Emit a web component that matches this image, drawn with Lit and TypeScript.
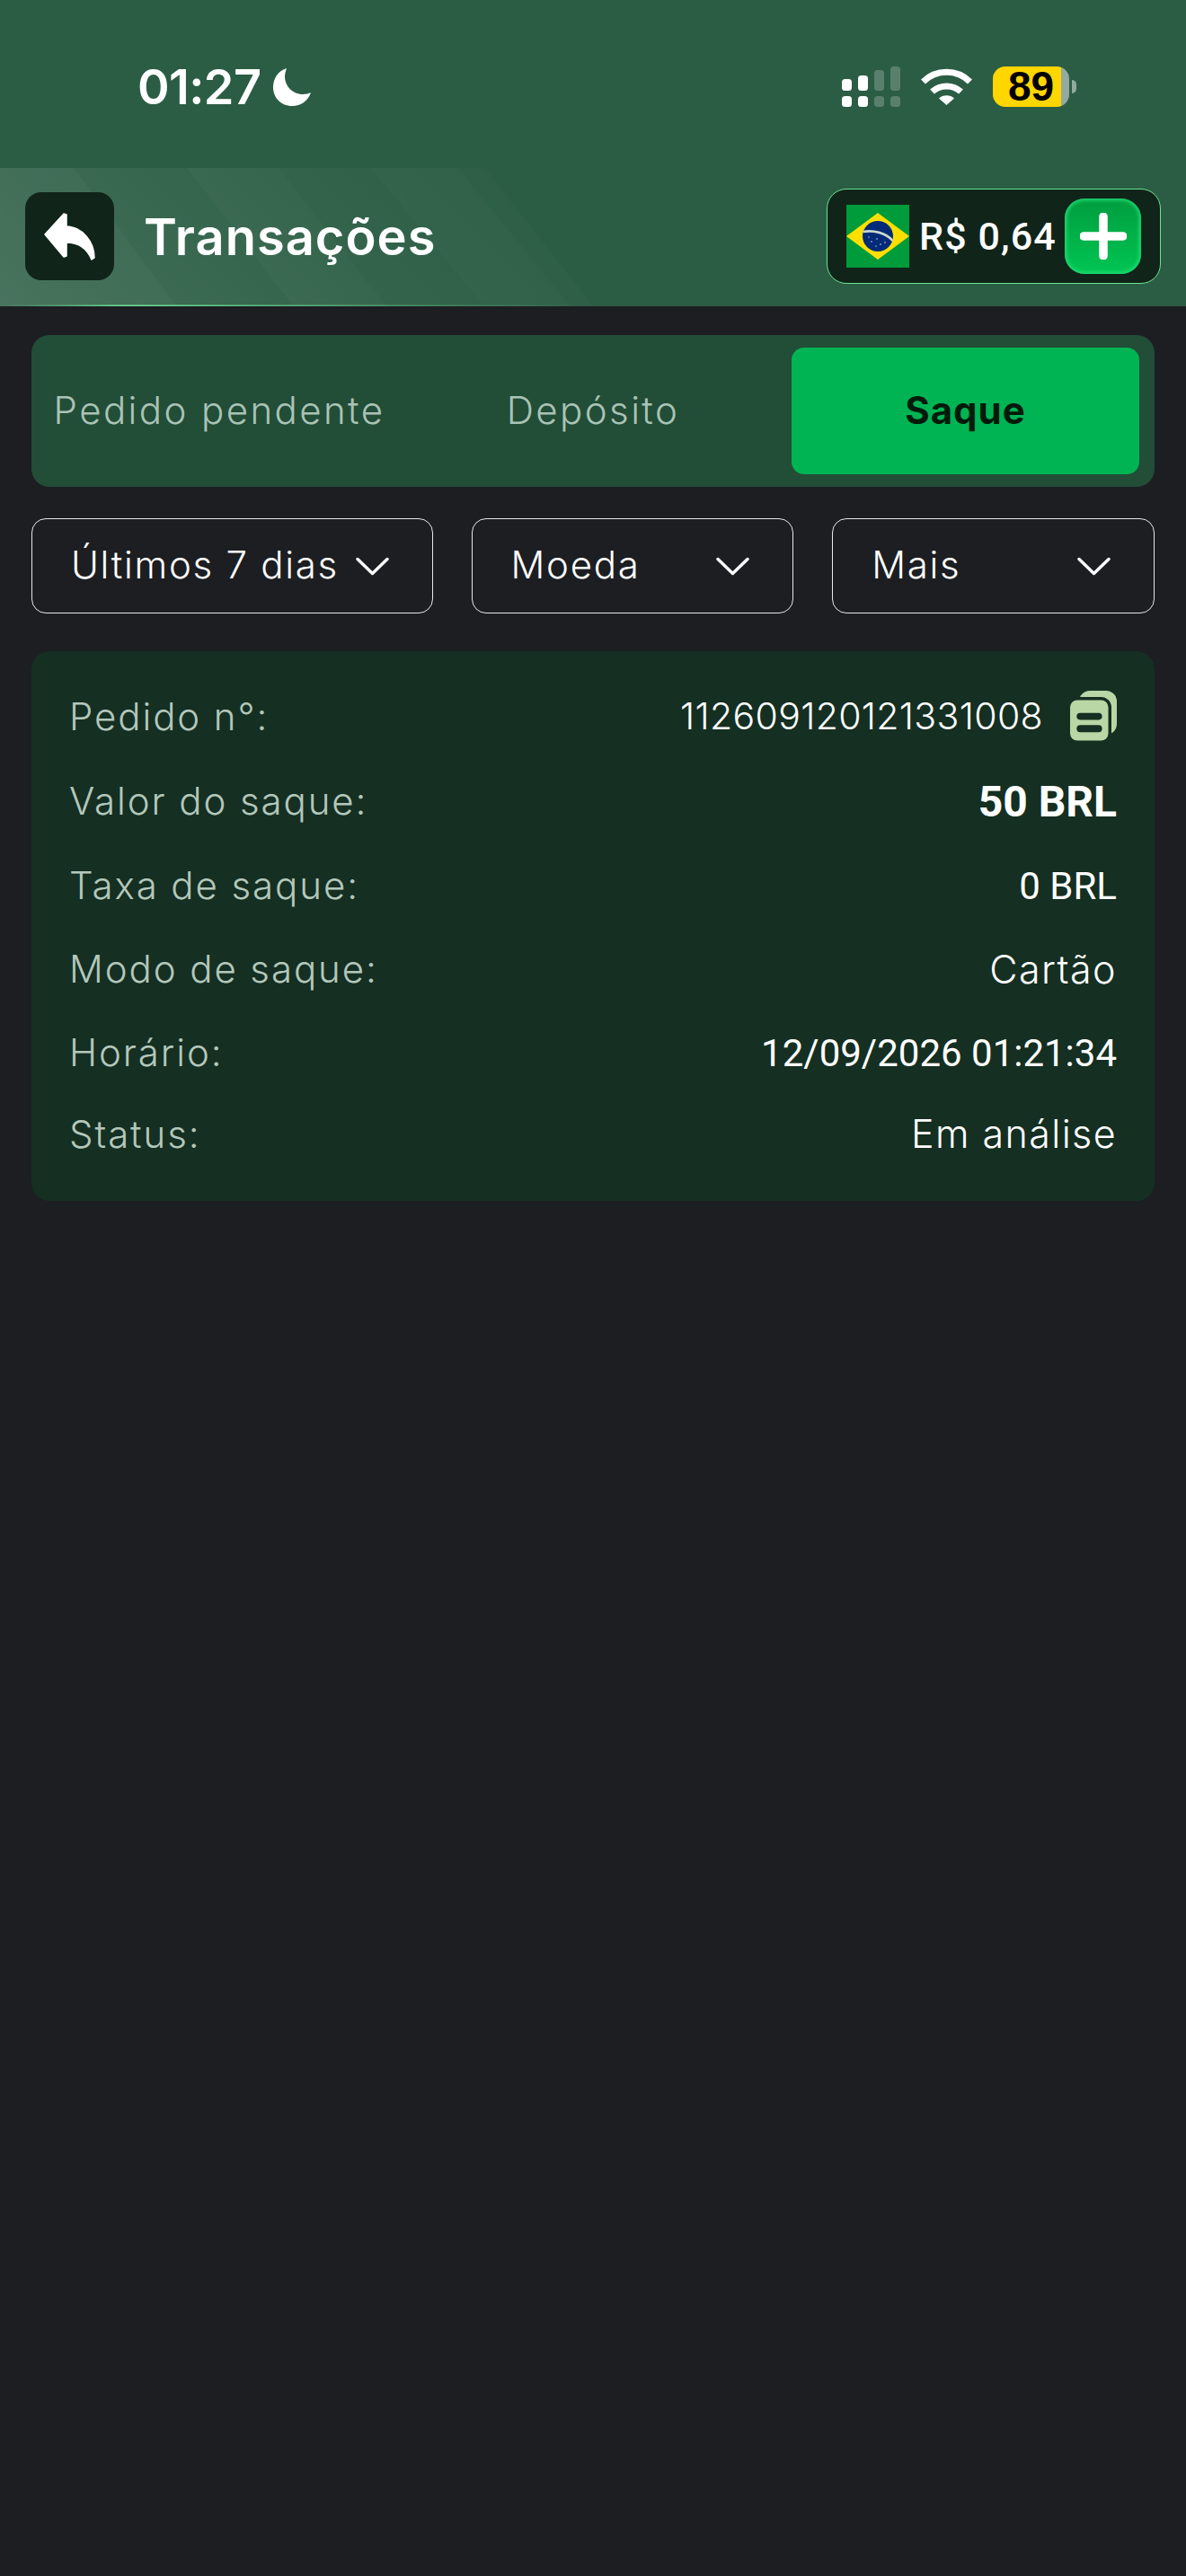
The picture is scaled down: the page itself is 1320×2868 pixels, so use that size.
import { LitElement, html, css, svg } from "lit";
import { customElement } from "lit/decorators.js";

const rows = [
  { label: "Pedido n°", value: "112609120121331008", cls: "mono", copy: true },
  { label: "Valor do saque", value: "50 BRL", cls: "amount" },
  { label: "Taxa de saque", value: "0 BRL", cls: "rob" },
  { label: "Modo de saque", value: "Cartão", cls: "plain" },
  { label: "Horário", value: "12/09/2026 01:21:34", cls: "rob" },
  { label: "Status", value: "Em análise", cls: "plain" },
];

const chevron = html`<svg class="chev" viewBox="0 0 37 21" width="37" height="21"><path d="M2 2.5 L18.5 18.5 L35 2.5" fill="none" stroke="#fff" stroke-width="3.4" stroke-linecap="round" stroke-linejoin="round"/></svg>`;

const stripes = svg`
  <defs>
    <linearGradient id="base" gradientUnits="userSpaceOnUse" x1="0" y1="341" x2="400" y2="-60">
      <stop offset="0" stop-color="#fff" stop-opacity="0.11"/>
      <stop offset="0.5" stop-color="#fff" stop-opacity="0.045"/>
      <stop offset="1" stop-color="#fff" stop-opacity="0"/>
    </linearGradient>
    <linearGradient id="st" gradientUnits="userSpaceOnUse" x1="0" y1="341" x2="640" y2="187">
      <stop offset="0" stop-color="#fff" stop-opacity="0.03"/>
      <stop offset="1" stop-color="#fff" stop-opacity="0.01"/>
    </linearGradient>
    <linearGradient id="ln" x1="0" y1="0" x2="1" y2="0">
      <stop offset="0" stop-color="#5fe08f" stop-opacity="0"/>
      <stop offset="0.22" stop-color="#6fe79a" stop-opacity="1"/>
      <stop offset="1" stop-color="#5fe08f" stop-opacity="0"/>
    </linearGradient>
  </defs>
  <polygon points="0,187 540,187 660,341 0,341" fill="url(#base)"/>
  <polygon points="0,187 82,187 197,341 0,341" fill="url(#st)"/>
  <polygon points="208,187 310,187 430,341 327,341" fill="url(#st)"/>
  <polygon points="413,187 510,187 635,341 539,341" fill="url(#st)"/>
  <rect x="0" y="339.5" width="640" height="1.5" fill="url(#ln)"/>
`;

@customElement("app-root")
export class AppRoot extends LitElement {
  static styles = css`
    :host {
      display: block;
      width: 1320px;
      min-height: 2868px;
      background: #1c1e22;
      font-family: Inter, "Noto Sans", sans-serif;
      color: #fff;
    }
    .header {
      position: relative;
      height: 341px;
      box-sizing: border-box;
      background: #2b5d44;
      padding-top: 74px;
      overflow: hidden;
    }
    .deco { position: absolute; left: 0; top: 0; }
    .status {
      position: relative;
      display: flex;
      align-items: flex-start;
      justify-content: space-between;
      height: 46px;
      padding: 0 122px 0 153px;
    }
    .status-left { display: flex; align-items: center; gap: 14px; height: 46px; }
    .time { font-size: 54px; font-weight: 600; line-height: 46px; letter-spacing: -0.6px; }
    .status-right { display: flex; align-items: flex-start; }
    .signal { display: block; margin-right: 23px; }
    .wifi { display: block; margin-top: 2px; margin-right: 23px; }
    .battery { display: flex; align-items: center; gap: 3px; }
    .batt-body {
      width: 85px; height: 45px; border-radius: 14px; box-sizing: border-box;
      background: linear-gradient(90deg, #ffd600 0 76px, #93aa9d 76px);
      display: flex; align-items: center; padding-left: 17px;
      color: #000; font: 700 46px/45px "Liberation Sans", Arial, sans-serif;
    }
    .batt-nub { width: 5px; height: 15px; border-radius: 0 6px 6px 0; background: #93aa9d; }
    .toolbar {
      position: relative;
      display: flex;
      align-items: center;
      height: 106px;
      margin-top: 90px;
      padding: 0 28px;
    }
    .back {
      width: 99px; height: 98px; border-radius: 18px; background: #102419;
      display: flex; align-items: center; justify-content: center;
    }
    .title { margin-left: 33px; font-size: 56px; font-weight: 600; flex: 1; line-height: 60px; letter-spacing: 1px; padding-top: 1px; }
    .wallet {
      display: flex; align-items: center; box-sizing: border-box;
      width: 372px; height: 106px; border: 1.5px solid #6be394; border-radius: 22px;
      background: #102419; padding-left: 21px;
    }
    .flag { display: block; }
    .bal { margin-left: 11px; font: 500 43px/50px Roboto, sans-serif; letter-spacing: 1.1px; width: 152px; white-space: nowrap; }
    .plus {
      margin-left: 10px; width: 85px; height: 84px; border-radius: 22px;
      background: linear-gradient(180deg, #009c3e 0%, #00c653 100%);
      box-shadow: inset 0 0 4px 2px #22dd77;
      display: flex; align-items: center; justify-content: center;
    }
    .content { padding: 32px 35px 0; }
    .tabs {
      display: grid;
      grid-template-columns: 390px 442px 387px;
      height: 169px; box-sizing: border-box;
      padding: 14px 17px 14px 14px;
      background: #224d37; border-radius: 20px;
    }
    .tab {
      display: flex; align-items: center; justify-content: center;
      font-size: 42px; font-weight: 300; color: #a9c3b5; letter-spacing: 2.4px;
      white-space: nowrap; border-radius: 14px; padding-bottom: 3px;
    }
    .tab.on { background: #00b453; color: #001a0b; font-weight: 700; letter-spacing: 1px; }
    .filters { display: flex; gap: 43px; margin-top: 35px; }
    .filter {
      display: flex; align-items: center; justify-content: space-between;
      box-sizing: border-box; height: 106px; border: 1.5px solid #e6e8e8; border-radius: 16px;
      padding: 0 48px 3px 43px; font-size: 42px; font-weight: 300; white-space: nowrap; letter-spacing: 1.7px;
    }
    .chev { margin-top: 3px; }
    .f1 { width: 447px; } .f2 { width: 359px; } .f3 { width: 359px; }
    .card {
      display: grid;
      grid-template-rows: 94px 94.5px 94px 92.5px 92px 90px;
      box-sizing: border-box; height: 612px; margin-top: 42px;
      padding: 26px 42px 29px; background: #152f22; border-radius: 20px;
    }
    .row { display: flex; align-items: center; justify-content: space-between; }
    .label { font-size: 42px; font-weight: 300; color: #b3c7bb; letter-spacing: 1.9px; white-space: nowrap; padding-bottom: 2px; }
    .val { display: flex; align-items: center; white-space: nowrap; }
    .val.mono, .val.plain { font-size: 43px; font-weight: 300; letter-spacing: 1.4px; padding-bottom: 2px; }
    .val.mono { font-size: 41px; letter-spacing: 0.35px; }
    .val.rob { font: 400 42px Roboto, sans-serif; }
    .val.amount { font: 700 48px Roboto, sans-serif; }
    .copy { display: block; margin-left: 30px; overflow: visible; }
  `;

  render() {
    return html`
      <div class="header">
        <svg class="deco" width="1320" height="341" viewBox="0 0 1320 341">${stripes}</svg>
        <div class="status">
          <div class="status-left">
            <span class="time">01:27</span>
            <svg viewBox="0 0 42 42" width="42" height="42"><path d="M15 0 C5 3 0 12 0 21 C0 33 9 42 21 42 C31 42 39 36 42 27 C40 28 36 29 33 29 C22 29 13 20 13 9 C13 6 14 3 15 0 Z" fill="#fff"/></svg>
          </div>
          <div class="status-right">
            <svg class="signal" viewBox="0 0 65 45" width="65" height="45">
              <g fill="#fff">
                <rect x="0" y="14" width="11" height="13" rx="3.5"/><rect x="18" y="10" width="11" height="17" rx="3.5"/>
                <rect x="0" y="33" width="11" height="12" rx="3.5"/><rect x="18" y="33" width="11" height="12" rx="3.5"/>
              </g>
              <g fill="#fff" fill-opacity="0.22">
                <rect x="36" y="4" width="11" height="23" rx="3.5"/><rect x="54" y="0" width="11" height="27" rx="3.5"/>
                <rect x="36" y="33" width="11" height="12" rx="3.5"/><rect x="54" y="33" width="11" height="12" rx="3.5"/>
              </g>
            </svg>
            <svg class="wifi" viewBox="0 0 57 41" width="57" height="41">
              <path d="M2.5 15 A37 37 0 0 1 54.5 15" fill="none" stroke="#fff" stroke-width="7"/>
              <path d="M12.5 26 A24 24 0 0 1 44.5 26" fill="none" stroke="#fff" stroke-width="7"/>
              <path d="M20 33.5 A13 13 0 0 1 37 33.5 L28.5 41 Z" fill="#fff"/>
            </svg>
            <div class="battery">
              <div class="batt-body">89</div>
              <div class="batt-nub"></div>
            </div>
          </div>
        </div>
        <div class="toolbar">
          <div class="back">
            <svg viewBox="0 0 57 55" width="57" height="55"><path d="M1 25 L22 2 L25 3 L25 16 C43 17 56 33 56 51 L53 53 C48 41 38 34 25 34 L25 49 L22 50 Z" fill="#fff" stroke="#fff" stroke-width="1.5" stroke-linejoin="round"/></svg>
          </div>
          <div class="title">Transações</div>
          <div class="wallet">
            <svg class="flag" viewBox="0 0 70 70" width="70" height="70">
              <rect width="70" height="70" fill="#009b3a"/>
              <polygon points="0,35 35,9 70,35 35,61" fill="#fedf00"/>
              <circle cx="35" cy="35" r="17" fill="#012a78"/>
              <path d="M18.5 30 C30 28 44 31 51.5 40" fill="none" stroke="#c9d8d0" stroke-width="2.6"/>
              <g fill="#cfe0ea"><circle cx="28" cy="41" r=".8"/><circle cx="34" cy="38" r=".8"/><circle cx="38" cy="44" r=".8"/><circle cx="43" cy="42" r=".8"/><circle cx="25" cy="36" r=".7"/><circle cx="33" cy="46" r=".7"/></g>
            </svg>
            <span class="bal">R$ 0,64</span>
            <div class="plus">
              <svg viewBox="0 0 52 52" width="52" height="52"><path d="M26 4 V48 M4 26 H48" stroke="#fff" stroke-width="9.5" stroke-linecap="round" fill="none"/></svg>
            </div>
          </div>
        </div>
      </div>
      <div class="content">
        <div class="tabs">
          <div class="tab">Pedido pendente</div>
          <div class="tab">Depósito</div>
          <div class="tab on">Saque</div>
        </div>
        <div class="filters">
          <div class="filter f1"><span>Últimos 7 dias</span>${chevron}</div>
          <div class="filter f2"><span>Moeda</span>${chevron}</div>
          <div class="filter f3"><span>Mais</span>${chevron}</div>
        </div>
        <div class="card">
          ${rows.map(
            (r) => html`<div class="row">
              <span class="label">${r.label}:</span>
              <span class="val ${r.cls}">${r.value}${r.copy
                ? html`<svg class="copy" viewBox="0 0 52 56" width="52" height="56">
                    <rect x="10" y="0" width="42" height="49" rx="12" fill="#b9d7a5"/>
                    <rect x="0" y="10.5" width="42.5" height="45" rx="8" fill="#b9d7a5" stroke="#152f22" stroke-width="7" paint-order="stroke"/>
                    <rect x="7.3" y="24.7" width="28.3" height="7.7" rx="3.8" fill="#152f22"/>
                    <rect x="7.3" y="38.3" width="28.3" height="8" rx="4" fill="#152f22"/>
                  </svg>`
                : ""}</span>
            </div>`
          )}
        </div>
      </div>
    `;
  }
}
